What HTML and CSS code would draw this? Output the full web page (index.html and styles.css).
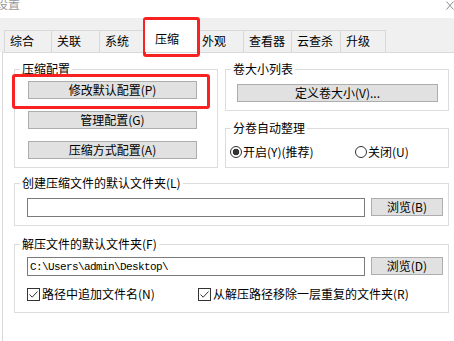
FILE: index.html
```html
<!DOCTYPE html>
<html lang="zh-CN">
<head>
    <meta charset="UTF-8">
    <title>设置</title>
    <link rel="stylesheet" href="styles.css">
</head>
<body>
    <div class="titlebar">
        <span class="caption">设置</span>
        <svg class="close" width="8" height="9" viewBox="0 0 8 9">
            <path d="M0.5 0.5 L7.5 8.5 M7.5 0.5 L0.5 8.5" stroke="#8c8c8c" stroke-width="1" fill="none"/>
        </svg>
    </div>

    <div class="tabs">
        <div class="tab" style="width:47px">综合</div>
        <div class="tab" style="width:48px">关联</div>
        <div class="tab" style="width:46px">系统</div>
        <div class="tab current" style="width:52px">压缩</div>
        <div class="tab" style="width:47px">外观</div>
        <div class="tab" style="width:48px">查看器</div>
        <div class="tab" style="width:49px">云查杀</div>
        <div class="tab last" style="width:46px">升级</div>
    </div>

    <div class="panel">
        <div class="toprow">
            <fieldset class="group">
                <legend>压缩配置</legend>
                <div class="btns">
                    <button class="btn cfg">修改默认配置(P)</button>
                    <button class="btn cfg">管理配置(G)</button>
                    <button class="btn cfg">压缩方式配置(A)</button>
                </div>
            </fieldset>
            <div class="col">
                <fieldset class="group">
                    <legend>卷大小列表</legend>
                    <div class="volbox">
                        <button class="btn vol">定义卷大小(V)...</button>
                    </div>
                </fieldset>
                <fieldset class="group split">
                    <legend>分卷自动整理</legend>
                    <div class="radios">
                        <label class="opt"><span class="radio on"></span>开启(Y)(推荐)</label>
                        <label class="opt"><span class="radio"></span>关闭(U)</label>
                    </div>
                </fieldset>
            </div>
        </div>

        <fieldset class="group path first">
            <legend>创建压缩文件的默认文件夹(L)</legend>
            <div class="pathrow">
                <input class="field" type="text" value="">
                <button class="btn browse">浏览(B)</button>
            </div>
        </fieldset>

        <fieldset class="group path second">
            <legend>解压文件的默认文件夹(F)</legend>
            <div class="pathrow">
                <input class="field" type="text" value="C:\Users\admin\Desktop\">
                <button class="btn browse">浏览(D)</button>
            </div>
            <div class="checks">
                <label class="opt">
                    <span class="check"><svg width="11" height="11" viewBox="0 0 11 11"><path d="M1.5 5.5 L4.2 8.2 L9.5 2.5" stroke="#333" stroke-width="1" fill="none"/></svg></span>路径中追加文件名(N)
                </label>
                <label class="opt">
                    <span class="check"><svg width="11" height="11" viewBox="0 0 11 11"><path d="M1.5 5.5 L4.2 8.2 L9.5 2.5" stroke="#333" stroke-width="1" fill="none"/></svg></span>从解压路径移除一层重复的文件夹(R)
                </label>
            </div>
        </fieldset>
    </div>

    <!-- marcas rojas -->
    <div class="mark mark-tab"></div>
    <div class="mark mark-btn"></div>
</body>
</html>
```

FILE: styles.css
```css
*{
    box-sizing: border-box;
}
body{
    margin: 0;
    width: 454px; height: 341px;
    overflow: hidden;
    background-color: #fff;
    color: #000;
    font: 12px/14px "Noto Sans CJK SC", "Noto Sans", sans-serif;
}
.titlebar{
    height: 18px;
    display: flex;
    justify-content: space-between;
    align-items: flex-start;
}
.caption{
    margin: -3px 0 0 -4px;
    color: #9a9a9a;
}
.close{
    margin: 1px 0 0 0;
}
.tabs{
    height: 34px;
    padding-left: 4px;
    background-color: #f0f0f0;
    display: flex;
    align-items: flex-end;
}
.tab{
    height: 22px;
    padding: 3px 0 0 5px;
    border-top: 1px solid #d9d9d9;
    border-left: 1px solid #d9d9d9;
    background-color: #f0f0f0;
}
.tab.last{
    border-right: 1px solid #d9d9d9;
}
.tab.current{
    position: relative;
    z-index: 1;
    height: 32px;
    margin-right: -1px;
    padding: 12px 0 0 10px;
    border: none;
    background-color: #fff;
}
.panel{
    height: 289px;
    margin-left: 2px;
    padding: 9px 5px 0 11px;
    border-top: 1px solid #d9d9d9;
    border-left: 1px solid #d9d9d9;
}
.toprow{
    display: grid;
    grid-template-columns: 204px 224px;
    column-gap: 7px;
}
.group{
    margin: 0;
    padding: 0;
    min-width: 0;
    border: 1px solid #dcdcdc;
}
.group legend{
    margin-left: 5px;
    padding: 0 2px;
    line-height: 14px;
}
.btn{
    display: block;
    height: 18px;
    padding: 0;
    background-color: #e1e1e1;
    border: 1px solid #adadad;
    border-radius: 0;
    color: #000;
    font: inherit;
}
.btns{
    display: flex;
    flex-direction: column;
    gap: 12px;
    padding: 5px 0 8px 13px;
}
.cfg{
    width: 169px;
}
.volbox{
    padding: 8px 0 8px 11px;
}
.vol{
    width: 201px;
}
.split{
    margin-top: 10px;
}
.radios{
    display: grid;
    grid-template-columns: 125px auto;
    padding: 10px 0 8px 4px;
}
.opt{
    display: flex;
    align-items: center;
    height: 14px;
}
.radio{
    width: 12px; height: 12px;
    margin-right: 1px;
    border: 1px solid #333;
    border-radius: 50%;
    background-color: #fff;
}
.radio.on{
    background: radial-gradient(circle, #333 0 3px, #fff 3.6px);
}
.path.first{
    margin-top: 8px;
}
.path.second{
    margin-top: 11px;
}
.pathrow{
    display: flex;
    gap: 6px;
    padding: 8px 0 8px 12px;
}
.second .pathrow{
    padding: 6px 0 0 12px;
}
.field{
    width: 338px; height: 19px;
    margin: 0;
    padding: 0 2px;
    border: 1px solid #7a7a7a;
    border-radius: 0;
    outline: none;
    font: 11px/17px "Liberation Mono", monospace;
    letter-spacing: -0.6px;
    color: #000;
}
.browse{
    width: 72px;
}
.checks{
    display: grid;
    grid-template-columns: 171px auto;
    padding: 11px 0 11px 12px;
}
.check{
    width: 13px; height: 13px;
    margin-right: 2px;
    border: 1px solid #333;
    background-color: #fff;
}
.check svg{
    display: block;
}
.mark{
    position: absolute;
    border: 3px solid #f82222;
    border-radius: 3px;
}
.mark-tab{
    left: 143px; top: 17px;
    width: 57px; height: 40px;
}
.mark-btn{
    left: 12px; top: 74px;
    width: 198px; height: 35px;
}
```
